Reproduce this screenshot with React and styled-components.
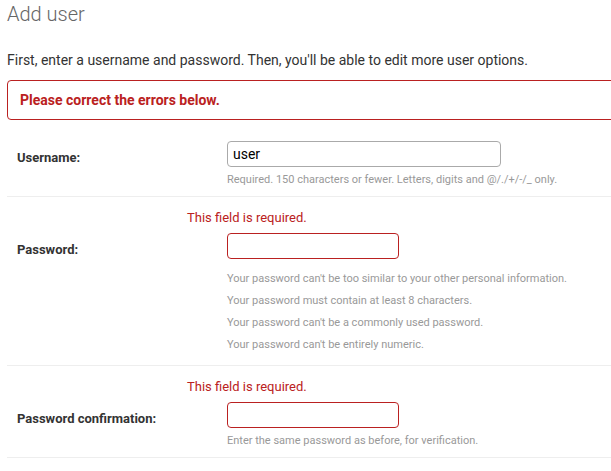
import styled, { createGlobalStyle } from 'styled-components';

const GlobalStyle = createGlobalStyle`
  html, body {
    margin: 0;
    padding: 0;
    background: #fff;
    overflow: hidden;
  }
  body {
    font-family: Roboto, "Liberation Sans", Arial, sans-serif;
    color: #333;
  }
`;

const Content = styled.div`
  width: 700px;
  padding: 0 0 0 7px;
`;

const Title = styled.h1`
  margin: 0;
  padding-top: 1px;
  font-size: 20px;
  font-weight: 300;
  line-height: 26px;
  color: #666;
`;

const Intro = styled.p`
  margin: 24px 0 11px;
  font-size: 14px;
  line-height: 18px;
  color: #333;
`;

const ErrorNote = styled.p`
  margin: 0 0 10px;
  padding: 10px 12px;
  border: 1px solid #ba2121;
  border-radius: 4px;
  font-size: 14px;
  font-weight: 700;
  line-height: 18px;
  color: #ba2121;
`;

const Row = styled.div`
  padding: 10px;
  border-bottom: 1px solid #eee;
`;

const ErrorList = styled.ul`
  margin: 0 0 4px 170px;
  padding: 0;
  list-style: none;
  font-size: 13px;
  line-height: 21px;
  color: #ba2121;
`;

const Field = styled.div`
  display: flex;
  align-items: flex-start;
  padding-top: 1px;
`;

const Label = styled.label`
  width: 210px;
  flex: none;
  padding-top: ${p => (p.$hasError ? '9px' : '9px')};
  font-size: 13px;
  font-weight: 700;
  line-height: 16px;
  color: #333;
`;

const Control = styled.div`
  display: flex;
  flex-direction: column;
`;

const Input = styled.input`
  box-sizing: border-box;
  width: ${p => p.$width}px;
  height: 26px;
  margin: 0;
  padding: 2px 5px;
  border: 1px solid ${p => (p.$error ? '#ba2121' : '#aaa')};
  border-radius: 4px;
  font-family: Roboto, "Liberation Sans", Arial, sans-serif;
  font-size: 14px;
  color: #000;
  outline: none;
`;

const Help = styled.div`
  margin-top: 6px;
  font-size: 11px;
  line-height: 13px;
  color: #999;
`;

const HelpList = styled.ul`
  margin: 13px 0 3px;
  padding: 0;
  list-style: none;
  display: flex;
  flex-direction: column;
  gap: 8px;
  font-size: 11px;
  line-height: 14px;
  color: #999;
`;

const passwordRules = [
  "Your password can't be too similar to your other personal information.",
  'Your password must contain at least 8 characters.',
  "Your password can't be a commonly used password.",
  "Your password can't be entirely numeric.",
];

export default function App() {
  return (
    <>
      <GlobalStyle />
      <Content>
        <Title>Add user</Title>
        <Intro>First, enter a username and password. Then, you'll be able to edit more user options.</Intro>
        <ErrorNote>Please correct the errors below.</ErrorNote>

        <Row>
          <Field>
            <Label>Username:</Label>
            <Control>
              <Input $width={274} defaultValue="user" />
              <Help>Required. 150 characters or fewer. Letters, digits and @/./+/-/_ only.</Help>
            </Control>
          </Field>
        </Row>

        <Row>
          <ErrorList>
            <li>This field is required.</li>
          </ErrorList>
          <Field>
            <Label $hasError>Password:</Label>
            <Control>
              <Input type="password" $width={172} $error />
              <HelpList>
                {passwordRules.map(rule => (
                  <li key={rule}>{rule}</li>
                ))}
              </HelpList>
            </Control>
          </Field>
        </Row>

        <Row>
          <ErrorList>
            <li>This field is required.</li>
          </ErrorList>
          <Field>
            <Label $hasError>Password confirmation:</Label>
            <Control>
              <Input type="password" $width={172} $error />
              <Help>Enter the same password as before, for verification.</Help>
            </Control>
          </Field>
        </Row>
      </Content>
    </>
  );
}
